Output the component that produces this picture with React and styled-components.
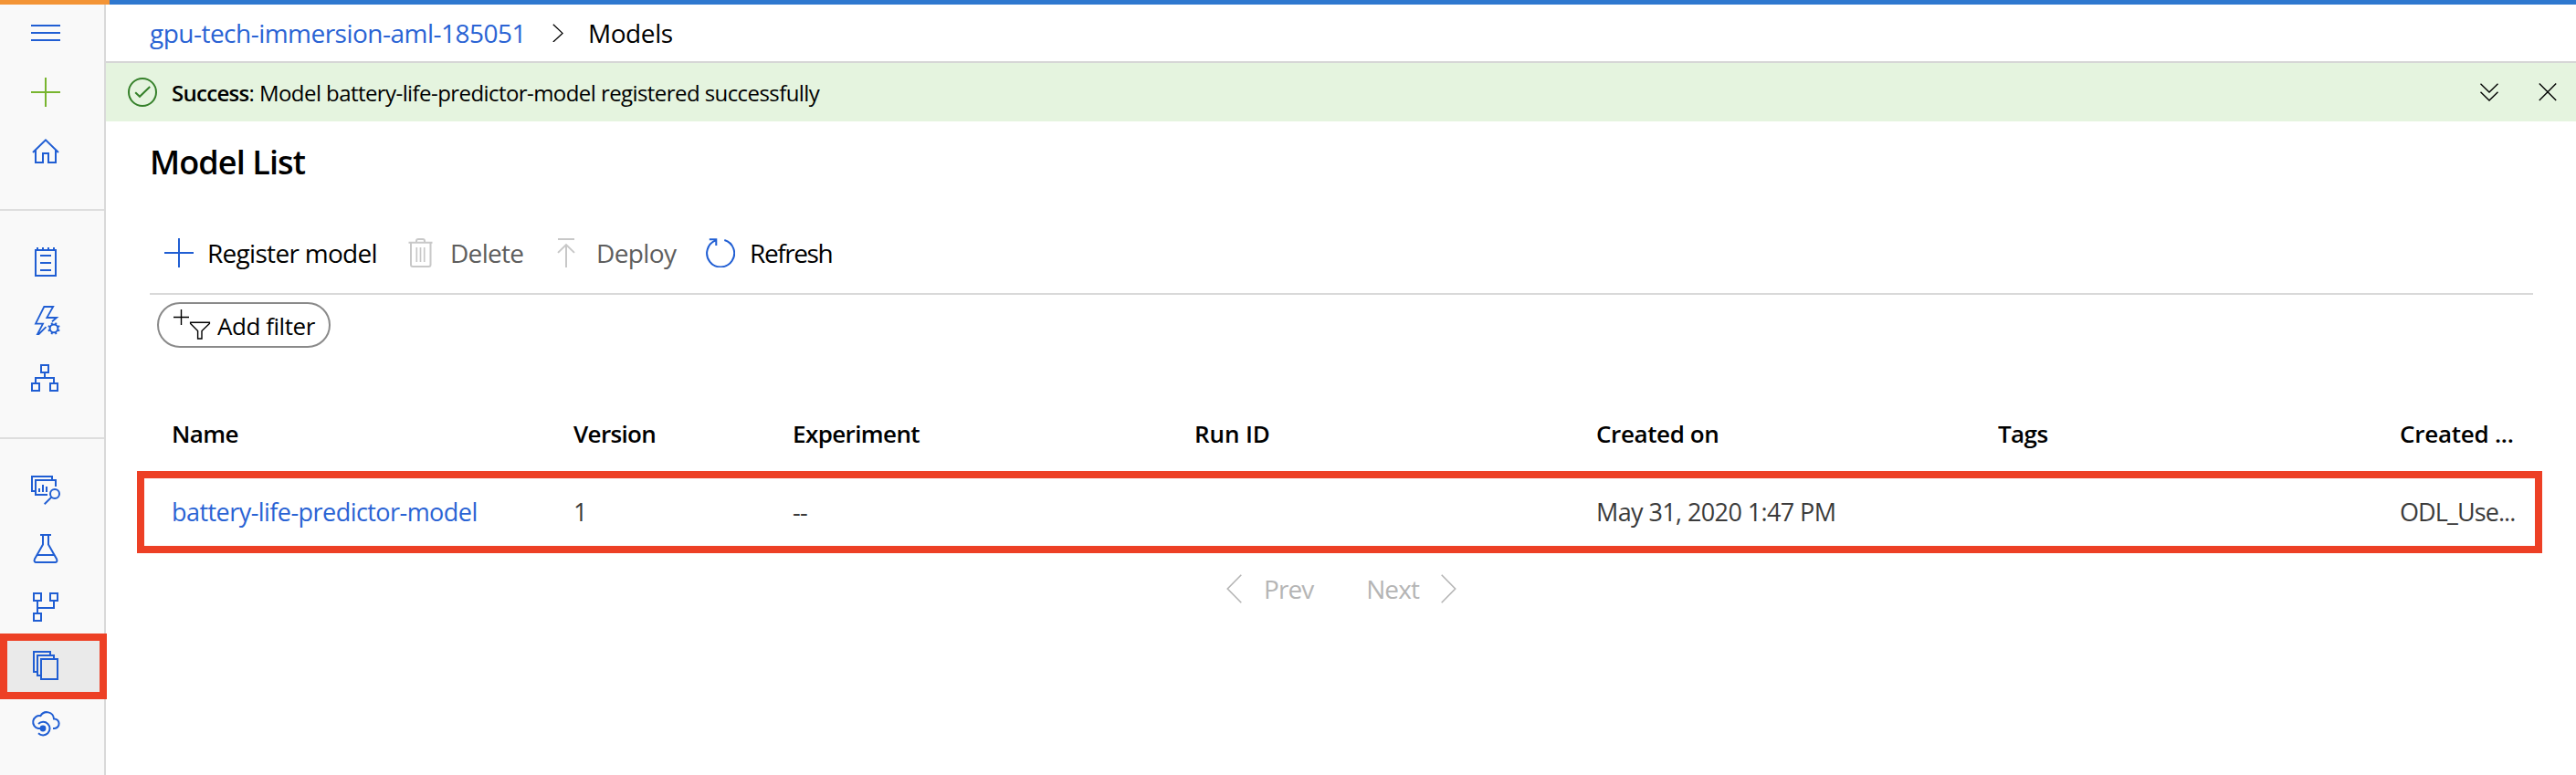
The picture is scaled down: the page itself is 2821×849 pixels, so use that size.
import React from "react";
import styled, { createGlobalStyle } from "styled-components";

const BLUE = "#205ed3";
const LINK = "#2a63d4";
const LINE = "#d9d9d9";
const MARK = "#ed4025";

const GlobalStyle = createGlobalStyle`
  * { box-sizing: border-box; }
  body {
    margin: 0;
    background: #fff;
    color: #000;
    font-family: "Open Sans", "Noto Sans", sans-serif;
    overflow: hidden;
  }
`;

const Page = styled.div`
  display: flex;
  flex-direction: column;
  height: 849px;
`;

const TopBar = styled.div`
  flex: none;
  height: 5px;
  background: linear-gradient(to right, #f39436 120px, #2e78cf 120px);
`;

const Body = styled.div`
  display: flex;
  flex: 1;
  min-height: 0;
`;

const Sidebar = styled.nav`
  flex: none;
  width: 116px;
  background: #f9f9f9;
  border-right: 2px solid ${LINE};
`;

const NavGroup = styled.div`
  padding: ${(p) => (p.$first ? "0 0 34px" : "24px 0 32px")};
  border-bottom: ${(p) => (p.$last ? "none" : "2px solid #dedede")};
`;

const NavItem = styled.a`
  position: relative;
  display: flex;
  align-items: center;
  height: ${(p) => p.$height || 64}px;
  padding-left: 34px;
  color: ${(p) => p.$color || BLUE};
`;

const SelectedItem = styled(NavItem)`
  background: #eaeaea;
  &::after {
    content: "";
    position: absolute;
    inset: -3px -3px -5px 0;
    border: 8px solid ${MARK};
  }
`;

const Icon = styled.svg`
  display: block;
  flex: none;
  fill: none;
  stroke: currentColor;
  stroke-width: ${(p) => p.$stroke || 2};
`;

const Main = styled.main`
  flex: 1;
  min-width: 0;
`;

const Breadcrumb = styled.div`
  display: flex;
  align-items: center;
  height: 64px;
  padding-left: 48px;
  border-bottom: 2px solid #d6d6d6;
  font-size: 28px;
  line-height: 38px;
  white-space: pre;
`;

const CrumbLink = styled.a`
  color: ${LINK};
  letter-spacing: -0.52px;
  margin-right: 29px;
`;

const CrumbCurrent = styled.span`
  margin-left: 27px;
  letter-spacing: -0.4px;
`;

const Banner = styled.div`
  display: flex;
  align-items: center;
  height: 64px;
  padding: 0 21px 0 24px;
  background: #e5f4df;
`;

const BannerText = styled.p`
  flex: 1;
  margin: 0 0 0 16px;
  padding-top: 2px;
  font-size: 24px;
  line-height: 32px;
  letter-spacing: -0.57px;
  white-space: pre;
`;

const Strong = styled.strong`
  font-weight: 600;
  letter-spacing: -0.7px;
`;

const BannerActions = styled.div`
  display: flex;
  gap: 44px;
`;

const Content = styled.section`
  padding: 21px 47px 0 48px;
`;

const Title = styled.h1`
  margin: 0 0 31px;
  font-size: 36px;
  line-height: 48px;
  font-weight: 600;
  letter-spacing: -0.9px;
`;

const Toolbar = styled.div`
  display: flex;
  align-items: center;
  height: 90px;
  padding-left: 16px;
  border-bottom: 2px solid ${LINE};
`;

const ToolButton = styled.div`
  display: flex;
  align-items: center;
  width: ${(p) => p.$width}px;
  gap: ${(p) => p.$gap}px;
  font-size: 28px;
  line-height: 38px;
  white-space: nowrap;
  letter-spacing: ${(p) => p.$spacing}px;
  color: ${(p) => (p.$disabled ? "#5e5e5e" : "#000")};
  & > svg {
    color: ${(p) => (p.$disabled ? "#c8c8c8" : BLUE)};
  }
`;

const FilterPill = styled.div`
  display: flex;
  align-items: center;
  width: 190px;
  height: 50px;
  margin: 8px 0 0 8px;
  padding-left: 16px;
  gap: 6px;
  border: 2px solid #8a8a8a;
  border-radius: 25px;
  font-size: 26px;
  line-height: 36px;
  letter-spacing: -0.45px;
  white-space: nowrap;
`;

const FilterLabel = styled.span`
  padding-top: 2px;
`;

const Table = styled.div`
  margin-top: 54px;
`;

const TableRow = styled.div`
  position: relative;
  display: grid;
  grid-template-columns: 440px 240px 440px 440px 440px 440px 1fr;
  align-items: center;
  height: 90px;
  padding-left: 24px;
  white-space: nowrap;
`;

const HeadRow = styled(TableRow)`
  height: 81px;
  padding-bottom: 2px;
`;

const MarkedRow = styled(TableRow)`
  &::after {
    content: "";
    position: absolute;
    inset: 0 -10px 0 -14px;
    border: 8px solid ${MARK};
  }
`;

const HeadCell = styled.div`
  font-size: 26px;
  line-height: 36px;
  font-weight: 600;
  letter-spacing: ${(p) => p.$spacing}px;
`;

const Cell = styled.div`
  font-size: 27px;
  line-height: 36px;
  color: ${(p) => (p.$link ? LINK : "#3b3b3b")};
  letter-spacing: ${(p) => p.$spacing || -0.6}px;
`;

const Pager = styled.div`
  display: flex;
  align-items: center;
  justify-content: space-between;
  width: 252px;
  height: 77px;
  margin: 0 auto;
  color: #b5b5b5;
`;

const PagerButton = styled.div`
  display: flex;
  align-items: center;
  gap: 24px;
  font-size: 28px;
  line-height: 38px;
  letter-spacing: -0.9px;
`;

function Glyph({ w = 32, h = 32, stroke, children }) {
  return (
    <Icon width={w} height={h} viewBox={`0 0 ${w} ${h}`} $stroke={stroke}>
      {children}
    </Icon>
  );
}

const PlusIcon = () => (
  <Glyph>
    <path d="M16 0V32M0 16H32" />
  </Glyph>
);

const MenuIcon = () => (
  <Glyph>
    <path d="M0 8H32M0 16H32M0 24H32" />
  </Glyph>
);

const HomeIcon = () => (
  <Glyph>
    <path d="M2 18L16 4.4L30 18" />
    <path d="M5 15V29H13V19H19V29H27V15" />
  </Glyph>
);

const NotebookIcon = () => (
  <Glyph>
    <path d="M5 3H27V31H5ZM7 0V3M13 0V3M19 0V3M25 0V3M10 9H22M10 17H22M10 25H22" />
  </Glyph>
);

const GEAR_TEETH = [0, 45, 90, 135, 180, 225, 270, 315];

const AutomatedIcon = () => (
  <Glyph>
    <path strokeWidth="1.8" d="M23 17.2L28 13H17.3L24.2 1H14.3L5 19.6H13L7 31H8.5L16.5 23.2" />
    <circle cx="25" cy="24.8" r="4.4" />
    {GEAR_TEETH.map((a) => (
      <path key={a} d="M25 20.6V18" transform={`rotate(${a + 22.5} 25 24.8)`} />
    ))}
  </Glyph>
);

const DesignerIcon = () => (
  <Glyph>
    <path d="M11 1H19V9H11ZM1 21H9V29H1ZM21 21H29V29H21ZM15 10V15M5 20V15H25V20" />
  </Glyph>
);

const DatasetIcon = () => (
  <Glyph>
    <path d="M4 17H1V1H23V4M18 21H5V5H27V12M9 14V18M13 10V18M17 12V18" />
    <circle cx="26" cy="20" r="5" />
    <path d="M22.4 23.6L14.7 31.2" />
  </Glyph>
);

const FlaskIcon = () => (
  <Glyph>
    <path d="M10 1H22M13 1V11.5L3.9 27.6C3 29.3 3.9 31 5.6 31H26.4C28.1 31 29 29.3 28.1 27.6L19 11.5V1M6.5 23H25.5" />
  </Glyph>
);

const PipelineIcon = () => (
  <Glyph>
    <path d="M3 1H11V9H3ZM21 1H29V9H21ZM3 23H11V31H3ZM7 10V22M7 17H25V10" />
  </Glyph>
);

const ModelsIcon = () => (
  <Glyph>
    <path d="M6 23H3V1H21V4M10 27H7V5H25V8M11 9H29V31H11Z" />
  </Glyph>
);

const EndpointIcon = () => (
  <Glyph>
    <path d="M13 21H8A7 7 0 1 1 10.4 7.2A7.8 7.8 0 0 1 25 10.4A5.2 5.2 0 0 1 25.6 21H24" />
    <path d="M8 16A7.3 7.3 0 1 1 8 26.2" />
    <circle cx="13" cy="21" r="3.4" fill="currentColor" stroke="none" />
  </Glyph>
);

const CheckIcon = () => (
  <Icon width="32" height="32" viewBox="0 0 32 32" color="#35802a">
    <circle cx="16" cy="16" r="15" />
    <path d="M8.2 16.2L13 20.8L24.2 10" />
  </Icon>
);

const ExpandIcon = () => (
  <Glyph w={20} h={20} stroke={1.4}>
    <path d="M.5 .8L10 10L19.5 .8M.5 9.8L10 19L19.5 9.8" />
  </Glyph>
);

const CloseIcon = () => (
  <Glyph w={20} h={20} stroke={1.4}>
    <path d="M.8 .6L19.2 19M19.2 .6L.8 19" />
  </Glyph>
);

const CrumbChevron = () => (
  <Glyph w={12} h={20} stroke={1.3}>
    <path d="M.8 .8L11 10.4L.8 20" />
  </Glyph>
);

const TrashIcon = () => (
  <Glyph>
    <path d="M3.5 4.8H29.5M12 4.5V3Q12 1 14 1H19Q21 1 21 3V4.5M6 5V29Q6 31 8 31H25.5Q27.5 31 27.5 29V5" />
    <path strokeWidth="1.7" d="M12.3 10V26M16.5 10V26M20.7 10V26" />
  </Glyph>
);

const DeployIcon = () => (
  <Glyph>
    <path d="M7 1H25M16 7V32M7 15.9L16 7.1L25 15.9" />
  </Glyph>
);

const RefreshIcon = () => (
  <Glyph>
    <path d="M20.3 2A15 15 0 1 1 10.8 2.4M3.8 1.3H11.3V8" />
  </Glyph>
);

const FilterIcon = () => (
  <Glyph w={42} h={36} stroke={1.4}>
    <path d="M8.5 1V18M0 9.5H17" />
    <path d="M18.6 15.2H39.4V16.4L31 24.5V33H26.6V24.5L18.6 16.4Z" />
  </Glyph>
);

const PrevIcon = () => (
  <Glyph w={17} h={32} stroke={1.6}>
    <path d="M16.3 .7L1.3 16L16.3 31.3" />
  </Glyph>
);

const NextIcon = () => (
  <Glyph w={17} h={32} stroke={1.6}>
    <path d="M.7 .7L15.7 16L.7 31.3" />
  </Glyph>
);

const COLUMNS = [
  ["Name", -0.6],
  ["Version", -0.65],
  ["Experiment", -0.6],
  ["Run ID", -0.1],
  ["Created on", -0.4],
  ["Tags", -0.6],
  ["Created ...", -0.25],
];

export default function App() {
  return (
    <>
      <GlobalStyle />
      <Page>
        <TopBar />
        <Body>
          <Sidebar>
            <NavGroup $first>
              <NavItem $height={62}><MenuIcon /></NavItem>
              <NavItem $height={68} $color="#78b52f"><PlusIcon /></NavItem>
              <NavItem $height={60}><HomeIcon /></NavItem>
            </NavGroup>
            <NavGroup>
              <NavItem><NotebookIcon /></NavItem>
              <NavItem><AutomatedIcon /></NavItem>
              <NavItem><DesignerIcon /></NavItem>
            </NavGroup>
            <NavGroup $last>
              <NavItem><DatasetIcon /></NavItem>
              <NavItem><FlaskIcon /></NavItem>
              <NavItem><PipelineIcon /></NavItem>
              <SelectedItem><ModelsIcon /></SelectedItem>
              <NavItem><EndpointIcon /></NavItem>
            </NavGroup>
          </Sidebar>
          <Main>
            <Breadcrumb>
              <CrumbLink>gpu-tech-immersion-aml-185051</CrumbLink>
              <CrumbChevron />
              <CrumbCurrent>Models</CrumbCurrent>
            </Breadcrumb>
            <Banner>
              <CheckIcon />
              <BannerText>
                <Strong>Success</Strong>: Model battery-life-predictor-model registered successfully
              </BannerText>
              <BannerActions>
                <ExpandIcon />
                <CloseIcon />
              </BannerActions>
            </Banner>
            <Content>
              <Title>Model List</Title>
              <Toolbar>
                <ToolButton $width={264} $gap={15} $spacing={-0.7}><PlusIcon />Register model</ToolButton>
                <ToolButton $width={160} $gap={17} $spacing={-0.7} $disabled><TrashIcon />Delete</ToolButton>
                <ToolButton $width={169} $gap={17} $spacing={-0.6} $disabled><DeployIcon />Deploy</ToolButton>
                <ToolButton $width={140} $gap={16} $spacing={-1.4}><RefreshIcon />Refresh</ToolButton>
              </Toolbar>
              <FilterPill><FilterIcon /><FilterLabel>Add filter</FilterLabel></FilterPill>
              <Table>
                <HeadRow>
                  {COLUMNS.map(([label, spacing]) => (
                    <HeadCell key={label} $spacing={spacing}>{label}</HeadCell>
                  ))}
                </HeadRow>
                <MarkedRow>
                  <Cell $link $spacing={-0.55}>battery-life-predictor-model</Cell>
                  <Cell>1</Cell>
                  <Cell>--</Cell>
                  <Cell />
                  <Cell>May 31, 2020 1:47 PM</Cell>
                  <Cell />
                  <Cell $spacing={-0.9}>ODL_Use...</Cell>
                </MarkedRow>
              </Table>
              <Pager>
                <PagerButton><PrevIcon />Prev</PagerButton>
                <PagerButton>Next<NextIcon /></PagerButton>
              </Pager>
            </Content>
          </Main>
        </Body>
      </Page>
    </>
  );
}
